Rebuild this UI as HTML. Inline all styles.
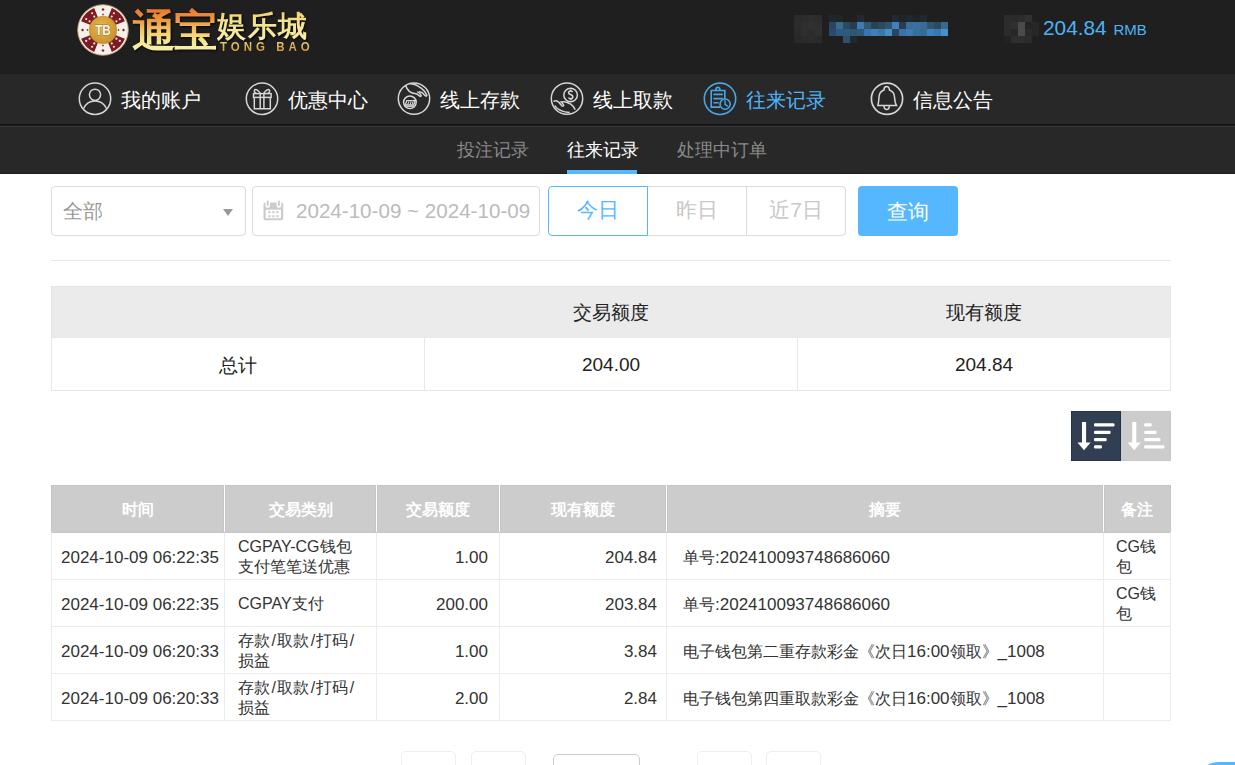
<!DOCTYPE html>
<html><head><meta charset="utf-8">
<style>
*{box-sizing:border-box;margin:0;padding:0}
html,body{width:1235px;height:765px;overflow:hidden;background:#fff;font-family:"Liberation Sans",sans-serif;position:relative}
.a{position:absolute}
#hdr{left:0;top:0;width:1235px;height:74px;background:#1f1f1f}
#nav{left:0;top:74px;width:1235px;height:100px;background:#282828}
.navline1{left:0;top:124px;width:1235px;height:1px;background:#121212}
.navline2{left:0;top:125px;width:1235px;height:1px;background:#202020}
.navline3{left:0;top:126px;width:1235px;height:1px;background:#353535}
.logo{font-family:"Liberation Serif",serif;font-weight:600;white-space:nowrap;background:linear-gradient(180deg,#e36e2a 0%,#ee9a40 28%,#f4d070 52%,#f7eca0 75%,#f8f2b8 100%);-webkit-background-clip:text;background-clip:text;color:transparent;filter:drop-shadow(1px 1px 1px rgba(0,0,0,.8))}
.logo2{font-family:"Liberation Sans",sans-serif;font-weight:bold;white-space:nowrap;background:linear-gradient(180deg,#f0dc80,#d08a28);-webkit-background-clip:text;background-clip:text;color:transparent}
.ni{color:#fff;font-size:20px;line-height:20px;white-space:nowrap}
.ic{width:36px;height:36px}
.sub{font-size:18px;line-height:20px;color:#8a8a8a;white-space:nowrap}
.box{border:1px solid #dcdcdc;border-radius:4px;background:#fff}
.btn{font-size:21px;line-height:46px;text-align:center;color:#c8c8c8;border:1px solid #dcdcdc;background:#fff}
.st{border:1px solid #e6e6e6}
.sth{font-size:19px;color:#222;text-align:center;line-height:19px}
.th{font-size:16px;font-weight:bold;color:#fff;text-align:center;line-height:16px}
.td{font-size:16px;color:#333;line-height:20px;white-space:nowrap}
.l{font-size:17px}
.sl{margin:0 1.4px}
.pg{border:1px solid #eeeeee;border-radius:5px;width:55px;height:40px;top:751px}
</style></head><body>

<!-- HEADER -->
<div class="a" id="hdr"></div>
<div class="a" style="left:0;top:73px;width:1235px;height:1px;background:#1c1c1c"></div>

<!-- LOGO -->
<svg class="a" style="left:76.5px;top:3.6px" width="52" height="52" viewBox="0 0 52 52">
<defs><radialGradient id="gold" cx="45%" cy="40%" r="60%"><stop offset="0" stop-color="#e9b94e"/><stop offset="1" stop-color="#c8922c"/></radialGradient></defs>
<circle cx="26" cy="26" r="25.3" fill="#f5f0ea" stroke="#b89a70" stroke-width="0.9"/>
<path d="M47.88 34.84 A23.6 23.6 0 0 1 34.84 47.88 L30.94 38.24 A13.2 13.2 0 0 0 38.24 30.94 Z" fill="#7e1a21"/><circle cx="42.77" cy="36.89" r="1.1" fill="#f3e8e0"/><circle cx="36.89" cy="42.77" r="1.1" fill="#f3e8e0"/><circle cx="39.42" cy="34.71" r="1.1" fill="#f3e8e0"/><circle cx="34.71" cy="39.42" r="1.1" fill="#f3e8e0"/><path d="M17.16 47.88 A23.6 23.6 0 0 1 4.12 34.84 L13.76 30.94 A13.2 13.2 0 0 0 21.06 38.24 Z" fill="#7e1a21"/><circle cx="15.11" cy="42.77" r="1.1" fill="#f3e8e0"/><circle cx="9.23" cy="36.89" r="1.1" fill="#f3e8e0"/><circle cx="17.29" cy="39.42" r="1.1" fill="#f3e8e0"/><circle cx="12.58" cy="34.71" r="1.1" fill="#f3e8e0"/><path d="M4.12 17.16 A23.6 23.6 0 0 1 17.16 4.12 L21.06 13.76 A13.2 13.2 0 0 0 13.76 21.06 Z" fill="#7e1a21"/><circle cx="9.23" cy="15.11" r="1.1" fill="#f3e8e0"/><circle cx="15.11" cy="9.23" r="1.1" fill="#f3e8e0"/><circle cx="12.58" cy="17.29" r="1.1" fill="#f3e8e0"/><circle cx="17.29" cy="12.58" r="1.1" fill="#f3e8e0"/><path d="M34.84 4.12 A23.6 23.6 0 0 1 47.88 17.16 L38.24 21.06 A13.2 13.2 0 0 0 30.94 13.76 Z" fill="#7e1a21"/><circle cx="36.89" cy="9.23" r="1.1" fill="#f3e8e0"/><circle cx="42.77" cy="15.11" r="1.1" fill="#f3e8e0"/><circle cx="34.71" cy="12.58" r="1.1" fill="#f3e8e0"/><circle cx="39.42" cy="17.29" r="1.1" fill="#f3e8e0"/><rect x="45.40" y="24.90" width="2.2" height="2.2" transform="rotate(45 46.50 26.00)" fill="#7e1a21"/><rect x="40.80" y="25.30" width="1.4" height="1.4" transform="rotate(45 41.50 26.00)" fill="#7e1a21"/><rect x="24.90" y="45.40" width="2.2" height="2.2" transform="rotate(45 26.00 46.50)" fill="#7e1a21"/><rect x="25.30" y="40.80" width="1.4" height="1.4" transform="rotate(45 26.00 41.50)" fill="#7e1a21"/><rect x="4.40" y="24.90" width="2.2" height="2.2" transform="rotate(45 5.50 26.00)" fill="#7e1a21"/><rect x="9.80" y="25.30" width="1.4" height="1.4" transform="rotate(45 10.50 26.00)" fill="#7e1a21"/><rect x="24.90" y="4.40" width="2.2" height="2.2" transform="rotate(45 26.00 5.50)" fill="#7e1a21"/><rect x="25.30" y="9.80" width="1.4" height="1.4" transform="rotate(45 26.00 10.50)" fill="#7e1a21"/>
<circle cx="26" cy="26" r="13.8" fill="url(#gold)" stroke="#b8862a" stroke-width="0.6"/>
<text x="26" y="31" text-anchor="middle" font-family="Liberation Sans" font-weight="bold" font-size="14.5" textLength="15.6" lengthAdjust="spacingAndGlyphs" fill="#f8f6f0" stroke="#9a7430" stroke-width="1.1" paint-order="stroke">TB</text>
</svg>
<div class="a logo" style="left:132px;top:6px;font-size:44px;line-height:52px;letter-spacing:-2px">通宝</div>
<div class="a logo" style="left:217px;top:6px;font-size:29px;line-height:40px;letter-spacing:1.5px;background-image:linear-gradient(180deg,#f0c868 0%,#f4e28c 40%,#f8f2b4 100%)">娱乐城</div>
<div class="a logo2" style="left:220px;top:40px;font-size:11.5px;line-height:12px;letter-spacing:4px;transform:scaleY(1.1);transform-origin:0 0">TONG BAO</div>

<!-- USER -->
<div class="a" style="left:794px;top:15px;width:7px;height:7px;background:#2a2a2a"></div>
<div class="a" style="left:801px;top:15px;width:7px;height:7px;background:#2c2c2c"></div>
<div class="a" style="left:808px;top:15px;width:7px;height:7px;background:#2e2e2e"></div>
<div class="a" style="left:815px;top:15px;width:7px;height:7px;background:#2c2c2c"></div>
<div class="a" style="left:794px;top:22px;width:7px;height:7px;background:#2c2c2c"></div>
<div class="a" style="left:801px;top:22px;width:7px;height:7px;background:#2e2e2e"></div>
<div class="a" style="left:808px;top:22px;width:7px;height:7px;background:#303030"></div>
<div class="a" style="left:815px;top:22px;width:7px;height:7px;background:#2e2e2e"></div>
<div class="a" style="left:794px;top:29px;width:7px;height:7px;background:#2a2a2a"></div>
<div class="a" style="left:801px;top:29px;width:7px;height:7px;background:#2e2e2e"></div>
<div class="a" style="left:808px;top:29px;width:7px;height:7px;background:#2c2c2c"></div>
<div class="a" style="left:815px;top:29px;width:7px;height:7px;background:#303030"></div>
<div class="a" style="left:794px;top:36px;width:7px;height:7px;background:#282828"></div>
<div class="a" style="left:801px;top:36px;width:7px;height:7px;background:#2a2a2a"></div>
<div class="a" style="left:808px;top:36px;width:7px;height:7px;background:#2c2c2c"></div>
<div class="a" style="left:815px;top:36px;width:7px;height:7px;background:#2a2a2a"></div>
<div class="a" style="left:829px;top:15px;width:7px;height:7px;background:#1e2730"></div>
<div class="a" style="left:836px;top:15px;width:7px;height:7px;background:#1f2626"></div>
<div class="a" style="left:857px;top:15px;width:7px;height:7px;background:#1f2a35"></div>
<div class="a" style="left:892px;top:15px;width:7px;height:7px;background:#1f2a35"></div>
<div class="a" style="left:899px;top:15px;width:7px;height:7px;background:#1f2428"></div>
<div class="a" style="left:906px;top:15px;width:7px;height:7px;background:#1e2833"></div>
<div class="a" style="left:913px;top:15px;width:7px;height:7px;background:#1f2226"></div>
<div class="a" style="left:920px;top:15px;width:7px;height:7px;background:#1f2a30"></div>
<div class="a" style="left:829px;top:22px;width:7px;height:7px;background:#2a4560"></div>
<div class="a" style="left:836px;top:22px;width:7px;height:7px;background:#3a6b8a"></div>
<div class="a" style="left:843px;top:22px;width:7px;height:7px;background:#2b4a60"></div>
<div class="a" style="left:850px;top:22px;width:7px;height:7px;background:#263c50"></div>
<div class="a" style="left:857px;top:22px;width:7px;height:7px;background:#3d7ab0"></div>
<div class="a" style="left:864px;top:22px;width:7px;height:7px;background:#2f5a75"></div>
<div class="a" style="left:871px;top:22px;width:7px;height:7px;background:#284258"></div>
<div class="a" style="left:878px;top:22px;width:7px;height:7px;background:#2a4a60"></div>
<div class="a" style="left:885px;top:22px;width:7px;height:7px;background:#2e5570"></div>
<div class="a" style="left:892px;top:22px;width:7px;height:7px;background:#4080c0"></div>
<div class="a" style="left:899px;top:22px;width:7px;height:7px;background:#2a3c50"></div>
<div class="a" style="left:906px;top:22px;width:7px;height:7px;background:#3a6e9a"></div>
<div class="a" style="left:913px;top:22px;width:7px;height:7px;background:#3a70a0"></div>
<div class="a" style="left:920px;top:22px;width:7px;height:7px;background:#3a6a95"></div>
<div class="a" style="left:927px;top:22px;width:7px;height:7px;background:#2f5575"></div>
<div class="a" style="left:934px;top:22px;width:7px;height:7px;background:#2a4a60"></div>
<div class="a" style="left:941px;top:22px;width:7px;height:7px;background:#3a6a8a"></div>
<div class="a" style="left:829px;top:29px;width:7px;height:7px;background:#2a4a70"></div>
<div class="a" style="left:836px;top:29px;width:7px;height:7px;background:#2f5a80"></div>
<div class="a" style="left:843px;top:29px;width:7px;height:7px;background:#2f5a7a"></div>
<div class="a" style="left:850px;top:29px;width:7px;height:7px;background:#2f5570"></div>
<div class="a" style="left:857px;top:29px;width:7px;height:7px;background:#2f5a78"></div>
<div class="a" style="left:864px;top:29px;width:7px;height:7px;background:#3a75b0"></div>
<div class="a" style="left:871px;top:29px;width:7px;height:7px;background:#3f80b8"></div>
<div class="a" style="left:878px;top:29px;width:7px;height:7px;background:#3a78a8"></div>
<div class="a" style="left:885px;top:29px;width:7px;height:7px;background:#4a8ec0"></div>
<div class="a" style="left:892px;top:29px;width:7px;height:7px;background:#2a4560"></div>
<div class="a" style="left:899px;top:29px;width:7px;height:7px;background:#3a72a8"></div>
<div class="a" style="left:906px;top:29px;width:7px;height:7px;background:#3f7aaa"></div>
<div class="a" style="left:913px;top:29px;width:7px;height:7px;background:#3570a0"></div>
<div class="a" style="left:920px;top:29px;width:7px;height:7px;background:#3a6a90"></div>
<div class="a" style="left:927px;top:29px;width:7px;height:7px;background:#3f80c0"></div>
<div class="a" style="left:934px;top:29px;width:7px;height:7px;background:#3a78b0"></div>
<div class="a" style="left:941px;top:29px;width:7px;height:7px;background:#4a90c8"></div>
<div class="a" style="left:843px;top:36px;width:7px;height:7px;background:#2f5070"></div>
<div class="a" style="left:850px;top:36px;width:7px;height:7px;background:#1f2a2a"></div>
<div class="a" style="left:1004px;top:15px;width:7px;height:7px;background:#2c2c2c"></div>
<div class="a" style="left:1011px;top:15px;width:7px;height:7px;background:#2a2a2a"></div>
<div class="a" style="left:1018px;top:15px;width:7px;height:7px;background:#2c2c2c"></div>
<div class="a" style="left:1025px;top:15px;width:7px;height:7px;background:#303030"></div>
<div class="a" style="left:1004px;top:22px;width:7px;height:7px;background:#2c2c2c"></div>
<div class="a" style="left:1011px;top:22px;width:7px;height:7px;background:#303030"></div>
<div class="a" style="left:1018px;top:22px;width:7px;height:7px;background:#4a4a4a"></div>
<div class="a" style="left:1025px;top:22px;width:7px;height:7px;background:#242424"></div>
<div class="a" style="left:1032px;top:22px;width:7px;height:7px;background:#262626"></div>
<div class="a" style="left:1004px;top:29px;width:7px;height:7px;background:#2c2c2c"></div>
<div class="a" style="left:1011px;top:29px;width:7px;height:7px;background:#272727"></div>
<div class="a" style="left:1018px;top:29px;width:7px;height:7px;background:#4a4a4a"></div>
<div class="a" style="left:1025px;top:29px;width:7px;height:7px;background:#2a2a2a"></div>
<div class="a" style="left:1032px;top:29px;width:7px;height:7px;background:#262626"></div>
<div class="a" style="left:1004px;top:36px;width:7px;height:7px;background:#232323"></div>
<div class="a" style="left:1011px;top:36px;width:7px;height:7px;background:#2e2e2e"></div>
<div class="a" style="left:1018px;top:36px;width:7px;height:7px;background:#2e2e2e"></div>
<div class="a" style="left:1025px;top:36px;width:7px;height:7px;background:#2c2c2c"></div>
<div class="a" style="left:1043px;top:16px;font-size:20.8px;line-height:24px;color:#4db3f6;white-space:nowrap">204.84 <span style="font-size:15px;margin-left:1px">RMB</span></div>

<!-- NAV -->
<div class="a" id="nav"></div>
<div class="a navline1"></div><div class="a navline2"></div><div class="a navline3"></div>
<div class="a" style="left:0;top:173px;width:1235px;height:1px;background:#1e1e1e"></div>

<div class="a ni" style="left:121px;top:90px">我的账户</div>
<div class="a ni" style="left:288px;top:90px">优惠中心</div>
<div class="a ni" style="left:440px;top:90px">线上存款</div>
<div class="a ni" style="left:593px;top:90px">线上取款</div>
<div class="a ni" style="left:746px;top:90px;color:#4fb4f5">往来记录</div>
<div class="a ni" style="left:913px;top:90px">信息公告</div>

<svg class="a" style="left:77px;top:81px" width="36" height="36" viewBox="0 0 36 36"><g stroke="#d6d6d6" stroke-width="1.5" fill="none"><circle cx="18" cy="17.8" r="15.7"/><circle cx="18" cy="13.8" r="5.6"/><path d="M6.6 27.5 C9 22 13 19.9 18 19.9 C23 19.9 27 22 29.4 27.5"/></g></svg>
<svg class="a" style="left:243.5px;top:81px" width="36" height="36" viewBox="0 0 36 36"><g stroke="#d6d6d6" stroke-width="1.5" fill="none"><circle cx="18" cy="17.8" r="15.7"/><rect x="9.5" y="12.6" width="17.6" height="3.8"/><path d="M10.3 16.4 V27.8 H26.3 V16.4"/><path d="M16.2 12.6 V27.8 M19.9 12.6 V27.8"/><path d="M16.4 12.4 C14 9 11.5 7.6 10.6 9 C9.8 10.4 11 12 12.6 12.6"/><path d="M19.7 12.4 C22 9 24.5 7.6 25.4 9 C26.2 10.4 25 12 23.4 12.6"/></g></svg>
<svg class="a" style="left:396px;top:81px" width="36" height="36" viewBox="0 0 36 36"><g stroke="#d6d6d6" stroke-width="1.5" fill="none"><circle cx="18" cy="17.6" r="15.7"/><circle cx="13.9" cy="21.3" r="6.3"/><path d="M9.6 4.3 C11 9.5 15 12.4 20 12.8 C21.5 13 22.5 14.2 23.5 15 C24.5 15.8 25.6 15.2 24.9 14 C24.1 12.5 22.6 11.2 21.2 10.6"/><path d="M13.4 2.6 C18 2.8 22 4.8 25.5 7.4 C28 9.4 30 11.8 30.8 14 C31.1 15.2 29.9 15.6 29 14.6 C27.8 12.8 25.8 11.2 23.2 10.6"/><path d="M10.8 19.6 H19.2 L17.6 24 H9.2 Z" stroke-width="1.3"/><path d="M8.6 25.3 H17.8" stroke-width="1.2"/></g><g fill="#d6d6d6"><path d="M12.3 20.4 h1.1 l-1.1 3 h-1.1 z M14.6 20.4 h1.1 l-1.1 3 h-1.1 z M16.7 20.4 h1.1 l-1.1 3 h-1.1 z"/></g></svg>
<svg class="a" style="left:549px;top:81px" width="36" height="36" viewBox="0 0 36 36"><g stroke="#d6d6d6" stroke-width="1.5" fill="none"><circle cx="18" cy="17.6" r="15.7"/><circle cx="21.6" cy="14" r="6.8"/><path d="M4.5 20.4 C6.5 19.2 8.5 19.6 10 21.6 L12.5 24.5 C13.5 25.5 15 25.3 14.6 24 C14.2 22.8 13 21.8 12 21 C14 20.5 16.5 20.8 19.5 22 C23 23.5 25 25.8 26.1 28.7"/><path d="M5.6 24.6 C8 28 13 31 20.7 31.5"/><path d="M23.6 11.2 C23.2 10.4 22.5 10 21.6 10 C20.4 10 19.6 10.7 19.6 11.7 C19.6 13.8 23.8 13.3 23.8 15.8 C23.8 16.9 22.9 17.8 21.6 17.8 C20.7 17.8 19.9 17.3 19.5 16.5 M21.6 8.6 V10 M21.6 17.8 V19.3" stroke-width="1.6"/></g></svg>
<svg class="a" style="left:702px;top:81px" width="36" height="36" viewBox="0 0 36 36"><g stroke="#4aa6e2" stroke-width="1.6" fill="none"><circle cx="18" cy="17.8" r="15.7"/><path d="M18 26.1 H9.2 V9.5 H22.8 V18"/><path d="M13.8 9.5 C13.8 7.2 14.6 6.2 15.9 6.2 C17.2 6.2 18 7.2 18 9.5"/><path d="M11.4 13.4 H20.8 M11.4 17.6 H20.8 M11.4 21.8 H16.6"/><circle cx="23.1" cy="23.1" r="5.1"/><path d="M23 19.2 V23.4 L25.8 25.4" stroke-width="1.4"/></g></svg>
<svg class="a" style="left:868.5px;top:81px" width="36" height="36" viewBox="0 0 36 36"><g stroke="#d6d6d6" stroke-width="1.7" fill="none"><circle cx="18" cy="17.8" r="15.6"/><path d="M8.9 24.4 H27.4 C26 22 25.7 19 25.5 16 C25.2 11.5 22.8 9.8 20.4 9 C20.4 7 19.3 5.6 17.7 5.6 C16.1 5.6 15 7 15 9 C12.6 9.8 10.3 11.5 10 16 C9.8 19 9.6 22 8.9 24.4 Z" stroke-width="1.5"/><path d="M15 24.6 C15 27.2 16 28.6 17.7 28.6 C19.4 28.6 20.4 27.2 20.4 24.6" stroke-width="1.5"/></g></svg>

<!-- SUB NAV -->
<div class="a sub" style="left:457px;top:140px">投注记录</div>
<div class="a sub" style="left:567px;top:140px;color:#fff">往来记录</div>
<div class="a sub" style="left:677px;top:140px">处理中订单</div>
<div class="a" style="left:567px;top:170px;width:70px;height:4px;background:#55b8ff"></div>

<!-- FILTERS -->
<div class="a box" style="left:51px;top:186px;width:195px;height:50px"></div>
<div class="a" style="left:63px;top:200px;font-size:19.5px;line-height:22px;color:#999">全部</div>
<div class="a" style="left:223px;top:209px;width:0;height:0;border-left:5px solid transparent;border-right:5px solid transparent;border-top:7px solid #999"></div>

<div class="a box" style="left:252px;top:186px;width:288px;height:50px"></div>
<svg class="a" style="left:263px;top:200px" width="21" height="21" viewBox="0 0 21 21"><rect x="0.5" y="2.6" width="19.7" height="17.7" rx="1.8" fill="#cccccc"/><rect x="2.4" y="0" width="4.6" height="7.8" rx="2" fill="#fff"/><rect x="13.6" y="0" width="4.6" height="7.8" rx="2" fill="#fff"/><rect x="3.7" y="0.4" width="2" height="5.6" rx="1" fill="#cccccc"/><rect x="14.9" y="0.4" width="2" height="5.6" rx="1" fill="#cccccc"/><rect x="2.7" y="9.7" width="15.3" height="8.6" fill="#fff"/><g fill="#cccccc"><rect x="5.3" y="11.1" width="2.2" height="2.1"/><rect x="9.3" y="11.1" width="2.2" height="2.1"/><rect x="13.3" y="11.1" width="2.2" height="2.1"/><rect x="5.3" y="15.2" width="2.2" height="2.1"/><rect x="9.3" y="15.2" width="2.2" height="2.1"/><rect x="13.3" y="15.2" width="2.2" height="2.1"/></g></svg>
<div class="a" style="left:296px;top:200px;font-size:20.6px;line-height:22px;color:#bbb;white-space:nowrap">2024-10-09 ~ 2024-10-09</div>

<div class="a btn" style="left:647px;top:186px;width:100px;height:50px">昨日</div>
<div class="a btn" style="left:746px;top:186px;width:100px;height:50px;border-radius:0 4px 4px 0">近7日</div>
<div class="a btn" style="left:548px;top:186px;width:100px;height:50px;border-color:#55b8ff;color:#55b8ff;border-radius:4px 0 0 4px">今日</div>
<div class="a btn" style="left:858px;top:186px;width:100px;height:50px;border:0;background:#55b8ff;color:#fff;border-radius:4px;line-height:52px">查询</div>

<div class="a" style="left:51px;top:260px;width:1120px;height:1px;background:#e8e8e8"></div>

<!-- SUMMARY TABLE -->
<div class="a" style="left:51px;top:286px;width:1120px;height:52px;background:#ebebeb;border:1px solid #e6e6e6"></div>
<div class="a" style="left:51px;top:337px;width:1120px;height:54px;border:1px solid #e8e8e8"></div>
<div class="a" style="left:424px;top:338px;width:1px;height:52px;background:#e8e8e8"></div>
<div class="a" style="left:797px;top:338px;width:1px;height:52px;background:#e8e8e8"></div>
<div class="a sth" style="left:424px;top:303px;width:374px">交易额度</div>
<div class="a sth" style="left:797px;top:303px;width:374px">现有额度</div>
<div class="a sth" style="left:51px;top:356px;width:374px">总计</div>
<div class="a sth" style="left:424px;top:355px;width:374px">204.00</div>
<div class="a sth" style="left:797px;top:355px;width:374px">204.84</div>

<!-- SORT -->
<div class="a" style="left:1071px;top:411px;width:50px;height:50px;background:#323f52;border:1px solid #24324a"></div>
<div class="a" style="left:1121px;top:411px;width:50px;height:50px;background:#cccccc;border:1px solid #c8c8c8"></div>

<svg class="a" style="left:1071px;top:411px" width="50" height="50" viewBox="0 0 50 50"><rect x="11" y="11" width="4.1" height="21.5" fill="#fff"/><path d="M6.5 31.4 H19.6 L13.05 39.2 Z" fill="#fff"/><g fill="#fff"><rect x="23" y="12.3" width="20.5" height="3.2" rx="1.2"/><rect x="23" y="19.7" width="16.6" height="3.2" rx="1.2"/><rect x="23" y="27" width="12.7" height="3.2" rx="1.2"/><rect x="23" y="34.3" width="7.9" height="3.2" rx="1.2"/></g></svg>
<svg class="a" style="left:1121px;top:411px" width="50" height="50" viewBox="0 0 50 50"><rect x="11.2" y="11" width="4.1" height="21.5" fill="#fff"/><path d="M6.7 31.4 H19.8 L13.25 39.2 Z" fill="#fff"/><g fill="#fff"><rect x="23.2" y="12.3" width="7.5" height="3.2" rx="1.2"/><rect x="23.2" y="19.7" width="12.4" height="3.2" rx="1.2"/><rect x="23.2" y="27" width="16.3" height="3.2" rx="1.2"/><rect x="23.2" y="34.3" width="20.2" height="3.2" rx="1.2"/></g></svg>

<!-- MAIN TABLE -->
<div class="a" style="left:51px;top:485px;width:1120px;height:48px;background:#cccccc;border:1px solid #c5c5c5"></div>
<div class="a" style="left:51px;top:532px;width:1120px;height:189px;border:1px solid #ececec;border-top:0"></div>
<!-- TABLE START -->
<div class="a" style="left:223px;top:486px;width:3px;height:46px;background:#c6c6c6"></div>
<div class="a" style="left:224px;top:485px;width:1px;height:47px;background:#fff"></div>
<div class="a" style="left:375px;top:486px;width:3px;height:46px;background:#c6c6c6"></div>
<div class="a" style="left:376px;top:485px;width:1px;height:47px;background:#fff"></div>
<div class="a" style="left:498px;top:486px;width:3px;height:46px;background:#c6c6c6"></div>
<div class="a" style="left:499px;top:485px;width:1px;height:47px;background:#fff"></div>
<div class="a" style="left:665px;top:486px;width:3px;height:46px;background:#c6c6c6"></div>
<div class="a" style="left:666px;top:485px;width:1px;height:47px;background:#fff"></div>
<div class="a" style="left:1102px;top:486px;width:3px;height:46px;background:#c6c6c6"></div>
<div class="a" style="left:1103px;top:485px;width:1px;height:47px;background:#fff"></div>
<div class="a th" style="left:51px;top:502px;width:174px">时间</div>
<div class="a th" style="left:224px;top:502px;width:153px">交易类别</div>
<div class="a th" style="left:376px;top:502px;width:124px">交易额度</div>
<div class="a th" style="left:499px;top:502px;width:168px">现有额度</div>
<div class="a th" style="left:666px;top:502px;width:438px">摘要</div>
<div class="a th" style="left:1103px;top:502px;width:68px">备注</div>
<div class="a" style="left:52px;top:579px;width:1118px;height:1px;background:#ececec"></div>
<div class="a" style="left:52px;top:626px;width:1118px;height:1px;background:#ececec"></div>
<div class="a" style="left:52px;top:673px;width:1118px;height:1px;background:#ececec"></div>
<div class="a" style="left:224px;top:533px;width:1px;height:187px;background:#ececec"></div>
<div class="a" style="left:376px;top:533px;width:1px;height:187px;background:#ececec"></div>
<div class="a" style="left:499px;top:533px;width:1px;height:187px;background:#ececec"></div>
<div class="a" style="left:666px;top:533px;width:1px;height:187px;background:#ececec"></div>
<div class="a" style="left:1103px;top:533px;width:1px;height:187px;background:#ececec"></div>
<div class="a td" style="left:52px;top:533px;width:172px;height:46px;padding-top:3px;display:flex;align-items:center;justify-content:flex-start;padding-left:9px;font-size:17px"><span>2024-10-09 06:22:35</span></div>
<div class="a td" style="left:225px;top:533px;width:151px;height:46px;padding-top:2px;display:flex;align-items:center;justify-content:flex-start;padding-left:13px;font-size:16px"><span>CGPAY-CG钱包<br>支付笔笔送优惠</span></div>
<div class="a td" style="left:377px;top:533px;width:122px;height:46px;padding-top:3px;display:flex;align-items:center;justify-content:flex-end;padding-right:11px;font-size:17px"><span>1.00</span></div>
<div class="a td" style="left:500px;top:533px;width:166px;height:46px;padding-top:3px;display:flex;align-items:center;justify-content:flex-end;padding-right:9px;font-size:17px"><span>204.84</span></div>
<div class="a td" style="left:667px;top:533px;width:436px;height:46px;padding-top:3px;display:flex;align-items:center;justify-content:flex-start;padding-left:16px;font-size:16px"><span>单号<span class="l">:202410093748686060</span></span></div>
<div class="a td" style="left:1104px;top:533px;width:66px;height:46px;padding-top:2px;display:flex;align-items:center;justify-content:flex-start;padding-left:12px;font-size:16px"><span>CG钱<br>包</span></div>
<div class="a td" style="left:52px;top:580px;width:172px;height:46px;padding-top:3px;display:flex;align-items:center;justify-content:flex-start;padding-left:9px;font-size:17px"><span>2024-10-09 06:22:35</span></div>
<div class="a td" style="left:225px;top:580px;width:151px;height:46px;padding-top:2px;display:flex;align-items:center;justify-content:flex-start;padding-left:13px;font-size:16px"><span>CGPAY支付</span></div>
<div class="a td" style="left:377px;top:580px;width:122px;height:46px;padding-top:3px;display:flex;align-items:center;justify-content:flex-end;padding-right:11px;font-size:17px"><span>200.00</span></div>
<div class="a td" style="left:500px;top:580px;width:166px;height:46px;padding-top:3px;display:flex;align-items:center;justify-content:flex-end;padding-right:9px;font-size:17px"><span>203.84</span></div>
<div class="a td" style="left:667px;top:580px;width:436px;height:46px;padding-top:3px;display:flex;align-items:center;justify-content:flex-start;padding-left:16px;font-size:16px"><span>单号<span class="l">:202410093748686060</span></span></div>
<div class="a td" style="left:1104px;top:580px;width:66px;height:46px;padding-top:2px;display:flex;align-items:center;justify-content:flex-start;padding-left:12px;font-size:16px"><span>CG钱<br>包</span></div>
<div class="a td" style="left:52px;top:627px;width:172px;height:46px;padding-top:3px;display:flex;align-items:center;justify-content:flex-start;padding-left:9px;font-size:17px"><span>2024-10-09 06:20:33</span></div>
<div class="a td" style="left:225px;top:627px;width:151px;height:46px;padding-top:2px;display:flex;align-items:center;justify-content:flex-start;padding-left:13px;font-size:16px"><span>存款<span class="sl">/</span>取款<span class="sl">/</span>打码<span class="sl">/</span><br>损益</span></div>
<div class="a td" style="left:377px;top:627px;width:122px;height:46px;padding-top:3px;display:flex;align-items:center;justify-content:flex-end;padding-right:11px;font-size:17px"><span>1.00</span></div>
<div class="a td" style="left:500px;top:627px;width:166px;height:46px;padding-top:3px;display:flex;align-items:center;justify-content:flex-end;padding-right:9px;font-size:17px"><span>3.84</span></div>
<div class="a td" style="left:667px;top:627px;width:436px;height:46px;padding-top:3px;display:flex;align-items:center;justify-content:flex-start;padding-left:16px;font-size:16px"><span>电子钱包第二重存款彩金《次日<span class="l">16:00</span>领取》<span class="l">_1008</span></span></div>
<div class="a td" style="left:1104px;top:627px;width:66px;height:46px;padding-top:2px;display:flex;align-items:center;justify-content:flex-start;padding-left:12px;font-size:16px"><span></span></div>
<div class="a td" style="left:52px;top:674px;width:172px;height:46px;padding-top:3px;display:flex;align-items:center;justify-content:flex-start;padding-left:9px;font-size:17px"><span>2024-10-09 06:20:33</span></div>
<div class="a td" style="left:225px;top:674px;width:151px;height:46px;padding-top:2px;display:flex;align-items:center;justify-content:flex-start;padding-left:13px;font-size:16px"><span>存款<span class="sl">/</span>取款<span class="sl">/</span>打码<span class="sl">/</span><br>损益</span></div>
<div class="a td" style="left:377px;top:674px;width:122px;height:46px;padding-top:3px;display:flex;align-items:center;justify-content:flex-end;padding-right:11px;font-size:17px"><span>2.00</span></div>
<div class="a td" style="left:500px;top:674px;width:166px;height:46px;padding-top:3px;display:flex;align-items:center;justify-content:flex-end;padding-right:9px;font-size:17px"><span>2.84</span></div>
<div class="a td" style="left:667px;top:674px;width:436px;height:46px;padding-top:3px;display:flex;align-items:center;justify-content:flex-start;padding-left:16px;font-size:16px"><span>电子钱包第四重取款彩金《次日<span class="l">16:00</span>领取》<span class="l">_1008</span></span></div>
<div class="a td" style="left:1104px;top:674px;width:66px;height:46px;padding-top:2px;display:flex;align-items:center;justify-content:flex-start;padding-left:12px;font-size:16px"><span></span></div>
<!-- TABLE END -->

<!-- PAGINATION -->
<div class="a pg" style="left:401px"></div>
<div class="a pg" style="left:471px"></div>
<div class="a pg" style="left:553px;top:754px;width:87px;border-color:#cccccc"></div>
<div class="a pg" style="left:697px"></div>
<div class="a pg" style="left:766px"></div>
<div class="a" style="left:1198px;top:762px;width:80px;height:60px;border-radius:20px;background:#55b8ff"></div>

</body></html>
